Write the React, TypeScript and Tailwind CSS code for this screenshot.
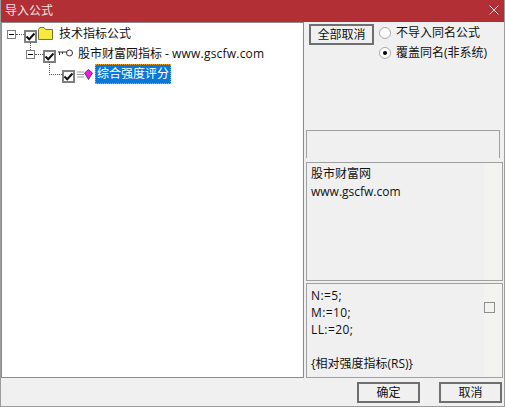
function Box() {
  return (
    <span className="mt-[4px] flex h-[13px] w-[13px] shrink-0 items-center justify-center border-2 border-[#7f7f7f] bg-white">
      <svg width="9" height="9" viewBox="0 0 9 9">
        <path d="M0.5 4.5 L3.2 7.2 L8.5 1.5" fill="none" stroke="#111" strokeWidth="2" />
      </svg>
    </span>
  );
}

function Minus() {
  return (
    <span className="flex h-[9px] w-[9px] shrink-0 items-center justify-center border border-[#808080] bg-white">
      <span className="h-px w-[5px] bg-black" />
    </span>
  );
}

function Dots({ w }: { w: number }) {
  return <span className="h-0 shrink-0 border-t border-dotted border-[#555]" style={{ width: w }} />;
}

function Radio({ checked }: { checked?: boolean }) {
  return (
    <span className="flex h-[12px] w-[12px] shrink-0 items-center justify-center rounded-full border border-[#a8a8a8] bg-white">
      {checked && <span className="h-[4px] w-[4px] rounded-full bg-black" />}
    </span>
  );
}

export default function App() {
  return (
    <div
      className="flex h-[407px] w-[505px] flex-col overflow-hidden border-x border-b border-[#9c9c9c] bg-[#f0f0f0] text-[12px] text-[#111]"
      style={{ fontFamily: '"Open Sans","Noto Sans CJK SC",sans-serif' }}
    >
      <div className="-mx-px flex h-[22px] shrink-0 items-center justify-between bg-[#b22f35] pl-[5px] pr-[6px] text-[#f0e4e4]">
        <span className="leading-none">导入公式</span>
        <svg className="-mt-[3px]" width="10" height="10" viewBox="0 0 10 10">
          <path d="M0.5 0.5 L9.5 9.5 M9.5 0.5 L0.5 9.5" stroke="#f3dede" strokeWidth="1" />
        </svg>
      </div>

      <div className="flex min-h-0 flex-1">
        <div className="relative h-[356px] w-[303px] shrink-0 border border-[#8c8c8c] bg-white pl-[5px] pt-[1px]">
          <div className="flex h-[20px] items-center">
            <Minus />
            <Dots w={8} />
            <Box />
            <svg className="mb-[2px] ml-[1px] shrink-0" width="15" height="13" viewBox="0 0 15 13">
              <path d="M0.5 12.5 V2.5 L2 0.5 H6 L7.5 2.5 H14.5 V12.5 Z" fill="#f6ea3c" stroke="#77733a" />
            </svg>
            <span className="ml-[6px] leading-none">技术指标公式</span>
          </div>
          <div className="flex h-[20px] items-center pl-[19px]">
            <Minus />
            <Dots w={8} />
            <Box />
            <svg className="mb-[2px] ml-[2px] shrink-0" width="15" height="8" viewBox="0 0 15 8">
              <path d="M0 3 H9 M1.5 3 V6 M4.5 3 V5" stroke="#333" fill="none" />
              <circle cx="11.5" cy="4" r="3" fill="#fff" stroke="#333" />
            </svg>
            <span className="ml-[5px] whitespace-nowrap leading-none">
              股市财富网指标 - <span className="tracking-[0.2px]">www.gscfw.com</span>
            </span>
          </div>
          <div className="flex h-[20px] items-center pl-[42px]">
            <Dots w={13} />
            <Box />
            <svg className="ml-[2px] shrink-0" width="7" height="7" viewBox="0 0 7 7">
              <path d="M0 1 H7 M0 3.5 H7 M0 6 H7" stroke="#999" />
            </svg>
            <svg className="shrink-0" width="9" height="11" viewBox="0 0 9 11">
              <path d="M4.5 0.5 L8.5 4 L4.5 10.5 L0.5 4 Z" fill="#e81ee0" stroke="#222" strokeWidth="0.7" />
            </svg>
            <span className="ml-[2px] flex h-[20px] w-[76px] items-center justify-center border border-dotted border-[#e8a030] bg-[#0a78d7] leading-none text-white">
              综合强度评分
            </span>
          </div>
          <span className="absolute left-[28px] top-[20px] h-[7px] border-l border-dotted border-[#555]" />
          <span className="absolute left-[47px] top-[39px] h-[13px] border-l border-dotted border-[#555]" />
        </div>

        <div className="flex min-w-0 flex-1 flex-col pl-[2px] pr-px">
          <div className="flex h-[108px] shrink-0 gap-[5px] pl-[3px] pt-[2px]">
            <button className="h-[21px] w-[65px] border-2 border-[#6f6f6f] bg-[#f0f0f0] leading-none">全部取消</button>
            <div className="flex flex-col gap-[5px] pt-px">
              <label className="flex h-[15px] items-center gap-[5px] whitespace-nowrap">
                <Radio />
                不导入同名公式
              </label>
              <label className="flex h-[15px] items-center gap-[5px] whitespace-nowrap">
                <Radio checked />
                覆盖同名(非系统)
              </label>
            </div>
          </div>
          <div className="mr-[3px] h-[28px] shrink-0 border-x border-t border-[#a0a0a0]" />
          <div className="relative mt-[4px] h-[119px] shrink-0 whitespace-pre-line border border-[#a0a0a0] pl-[4px] pt-[2px] leading-[18px]">
            {"股市财富网\nwww.gscfw.com"}
            <span className="absolute inset-y-0 right-0 w-[18px] bg-[#f3f3f0]" />
          </div>
          <div className="relative mt-[2px] h-[95px] shrink-0 whitespace-pre-line border border-[#a0a0a0] pl-[4px] pt-[3px] leading-[17px]">
            <span className="tracking-[0.4px]">{"N:=5;\nM:=10;\nLL:=20;\n\n"}</span>
            {"{相对强度指标(RS)}"}
            <span className="absolute inset-y-0 right-0 w-[18px] bg-[#f3f3f0]" />
            <span className="absolute right-[7px] top-[18px] h-[11px] w-[11px] border border-[#8f8f8f]" />
          </div>
        </div>
      </div>

      <div className="flex h-[28px] shrink-0 items-start justify-end gap-[19px] pr-[2px] pt-[4px]">
        <button className="h-[21px] w-[63px] border-2 border-[#6f6f6f] leading-none">确定</button>
        <button className="h-[21px] w-[63px] border-2 border-[#6f6f6f] leading-none">取消</button>
      </div>
    </div>
  );
}
